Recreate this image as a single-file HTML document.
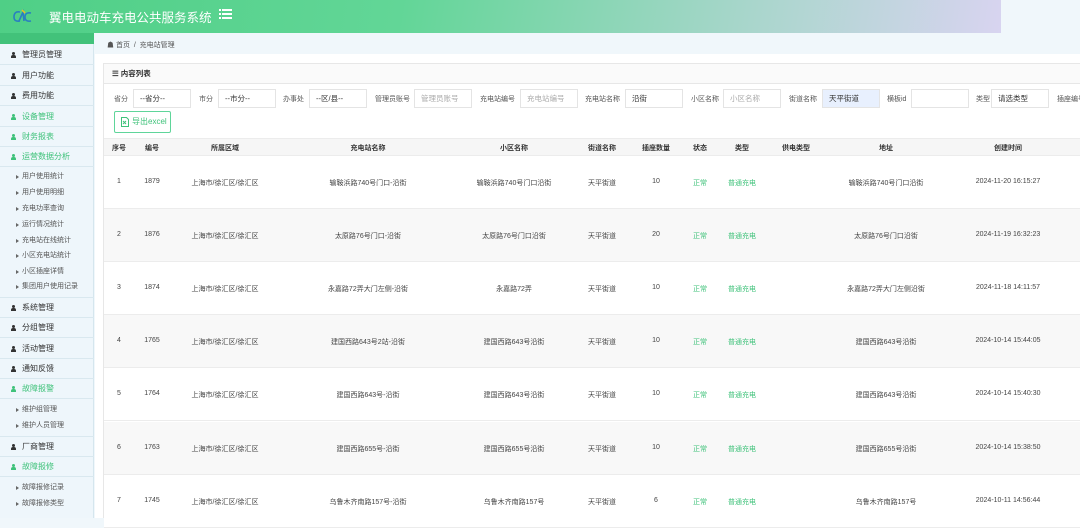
<!DOCTYPE html>
<html><head><meta charset="utf-8"><style>
*{margin:0;padding:0;box-sizing:border-box}
body{width:1080px;height:518px;overflow:hidden;background:#f0f7fb;font-family:"Liberation Sans","Noto Sans CJK SC",sans-serif;font-size:8px;color:#333;position:relative}
.hdr{position:absolute;left:0;top:0;width:1001px;height:33px;background:linear-gradient(100deg,#4fcf86 0%,#62d697 40%,#a9d6cc 75%,#d8d4f0 100%)}
.hdr .t{position:absolute;left:49px;top:7px;font-size:12.5px;color:#fff;white-space:nowrap}
.side{position:absolute;left:0;top:33px;width:94px;height:485px;background:#eef6fb;border-right:1px solid #d5e6ee}
.it{position:absolute;left:0;width:94px;height:20px;border-bottom:1px solid #d9e8ef;font-size:8px;line-height:20px;padding-left:22px;color:#333}
.it.g{color:#3fc27a}
.it i{position:absolute;left:11px;top:7px;width:5px;height:6px}
.it i:before{content:"";position:absolute;left:1px;top:0;width:3px;height:3px;border-radius:50%;background:currentColor}
.it i:after{content:"";position:absolute;left:0;top:3px;width:5px;height:3px;border-radius:2px 2px 0 0;background:currentColor}
.sub{position:absolute;left:22px;font-size:7px;color:#555;line-height:10px}
.sub:before{content:"";position:absolute;left:-6px;top:3px;border-left:3px solid #666;border-top:2px solid transparent;border-bottom:2px solid transparent}
.main{position:absolute;left:95px;top:54px;width:985px;height:464px;background:#fff}
.bc{position:absolute;left:107px;top:40px;font-size:7px;color:#555}
.card{position:absolute;left:103px;top:63px;width:977px;height:455px;border:1px solid #e7e7e7;border-right:none;background:#fff}
.ch{height:20px;background:#fafafa;border-bottom:1px solid #e7e7e7;font-size:7.5px;line-height:20px;padding-left:8px;font-weight:bold}
.lb{position:absolute;top:94px;font-size:7px;color:#555;white-space:nowrap}
.in{position:absolute;top:89px;height:19px;border:1px solid #e4e4e4;background:#fff;font-size:7.5px;line-height:17px;padding-left:6px;color:#333}
.ph{color:#aaa}
.btn{position:absolute;left:114px;top:111px;width:57px;height:22px;border:1px solid #5fd59a;border-radius:2px;color:#3fc27a;font-size:8px;line-height:20px;padding-left:17px}
.row{position:absolute;left:104px;width:976px;border-bottom:1px solid #ececec}
.c{position:absolute;transform:translateX(-50%);white-space:nowrap;font-size:7px;color:#444}
.th .c{font-weight:bold;color:#333}
.gr{color:#3fc27a!important}
</style></head><body>
<div class="hdr">
<svg style="position:absolute;left:12px;top:9px" width="22" height="14" viewBox="0 0 22 14"><path d="M8 3 Q2 2 2 8 Q2 13 8 12" stroke="#2a7fc0" stroke-width="1.6" fill="none"/><path d="M7 12 L11 3 L12 12" stroke="#2a7fc0" stroke-width="1.6" fill="none"/><path d="M19 4 Q13 3 13 8 Q13 13 19 12" stroke="#2a7fc0" stroke-width="1.6" fill="none"/><path d="M10 1 L13 4" stroke="#f0c020" stroke-width="1.5"/></svg>
<div class="t">翼电电动车充电公共服务系统</div>
<svg style="position:absolute;left:219px;top:9px" width="13" height="10"><g fill="#fff"><rect x="0" y="0" width="2" height="2"/><rect x="3" y="0" width="10" height="2"/><rect x="0" y="4" width="2" height="2"/><rect x="3" y="4" width="10" height="2"/><rect x="0" y="8" width="2" height="2"/><rect x="3" y="8" width="10" height="2"/></g></svg>
</div>
<div class="side">
<div style="position:absolute;left:0;top:0;width:94px;height:11px;background:#42c27a"></div>
<div class="it" style="top:12px"><i></i>管理员管理</div>
<div class="it" style="top:33px"><i></i>用户功能</div>
<div class="it" style="top:53px"><i></i>费用功能</div>
<div class="it g" style="top:74px"><i></i>设备管理</div>
<div class="it g" style="top:94px"><i></i>财务报表</div>
<div class="it g" style="top:114px"><i></i>运营数据分析</div>
<div class="sub" style="top:139px">用户使用统计</div>
<div class="sub" style="top:155px">用户使用明细</div>
<div class="sub" style="top:171px">充电功率查询</div>
<div class="sub" style="top:187px">运行情况统计</div>
<div class="sub" style="top:203px">充电站在线统计</div>
<div class="sub" style="top:218px">小区充电站统计</div>
<div class="sub" style="top:234px">小区插座详情</div>
<div class="sub" style="top:249px">集团用户使用记录</div>
<div style="position:absolute;top:264px;left:0;width:94px;border-top:1px solid #d9e8ef"></div>
<div class="it" style="top:265px"><i></i>系统管理</div>
<div class="it" style="top:285px"><i></i>分组管理</div>
<div class="it" style="top:306px"><i></i>活动管理</div>
<div class="it" style="top:326px"><i></i>通知反馈</div>
<div class="it g" style="top:346px"><i></i>故障报警</div>
<div class="sub" style="top:372px">维护组管理</div>
<div class="sub" style="top:388px">维护人员管理</div>
<div style="position:absolute;top:403px;left:0;width:94px;border-top:1px solid #d9e8ef"></div>
<div class="it" style="top:404px"><i></i>厂商管理</div>
<div class="it g" style="top:424px"><i></i>故障报修</div>
<div class="sub" style="top:450px">故障报修记录</div>
<div class="sub" style="top:466px">故障报修类型</div>
</div>
<div class="main"></div>
<div class="bc">☗ 首页 &nbsp;/&nbsp; 充电站管理</div>
<div class="card"><div class="ch">☰ 内容列表</div></div>
<div class="lb" style="left:114px">省分</div><div class="in" style="left:133px;width:58px">--省分--</div>
<div class="lb" style="left:199px">市分</div><div class="in" style="left:218px;width:58px">--市分--</div>
<div class="lb" style="left:283px">办事处</div><div class="in" style="left:309px;width:58px">--区/县--</div>
<div class="lb" style="left:375px">管理员账号</div><div class="in ph" style="left:414px;width:58px">管理员账号</div>
<div class="lb" style="left:480px">充电站编号</div><div class="in ph" style="left:520px;width:58px">充电站编号</div>
<div class="lb" style="left:585px">充电站名称</div><div class="in" style="left:625px;width:58px">沿街</div>
<div class="lb" style="left:691px">小区名称</div><div class="in ph" style="left:723px;width:58px">小区名称</div>
<div class="lb" style="left:789px">街道名称</div><div class="in" style="left:822px;width:58px;background:#e8f0fe">天平街道</div>
<div class="lb" style="left:887px">横板id</div><div class="in" style="left:911px;width:58px"></div>
<div class="lb" style="left:976px">类型</div><div class="in" style="left:991px;width:58px">请选类型</div>
<div class="lb" style="left:1057px">插座编号</div>
<div class="btn"><svg style="position:absolute;left:6px;top:5px" width="8" height="10"><path d="M0.5 .5h5l2 2v7h-7z" fill="none" stroke="#3fc27a"/><path d="M2 4l3 3M5 4l-3 3" stroke="#3fc27a"/></svg>导出excel</div>
<div class="row th" style="top:138px;height:18px;background:#f6f6f6;border-top:1px solid #ececec">
<div class="c" style="left:15px;top:4px">序号</div><div class="c" style="left:48px;top:4px">编号</div><div class="c" style="left:121px;top:4px">所属区域</div><div class="c" style="left:264px;top:4px">充电站名称</div><div class="c" style="left:410px;top:4px">小区名称</div><div class="c" style="left:498px;top:4px">街道名称</div><div class="c" style="left:552px;top:4px">插座数量</div><div class="c" style="left:596px;top:4px">状态</div><div class="c" style="left:638px;top:4px">类型</div><div class="c" style="left:692px;top:4px">供电类型</div><div class="c" style="left:782px;top:4px">地址</div><div class="c" style="left:904px;top:4px">创建时间</div>
</div>
<div id="rows"></div>
<script>
var d=[["1","1879","输鞍浜路740号门口-沿街","输鞍浜路740号门口沿街","10","输鞍浜路740号门口沿街","2024-11-20 16:15:27"],
["2","1876","太原路76号门口-沿街","太原路76号门口沿街","20","太原路76号门口沿街","2024-11-19 16:32:23"],
["3","1874","永嘉路72弄大门左侧-沿街","永嘉路72弄","10","永嘉路72弄大门左侧沿街","2024-11-18 14:11:57"],
["4","1765","建国西路643号2站-沿街","建国西路643号沿街","10","建国西路643号沿街","2024-10-14 15:44:05"],
["5","1764","建国西路643号-沿街","建国西路643号沿街","10","建国西路643号沿街","2024-10-14 15:40:30"],
["6","1763","建国西路655号-沿街","建国西路655号沿街","10","建国西路655号沿街","2024-10-14 15:38:50"],
["7","1745","乌鲁木齐南路157号-沿街","乌鲁木齐南路157号","6","乌鲁木齐南路157号","2024-10-11 14:56:44"]];
var h="";for(var i=0;i<7;i++){var r=d[i],t=156+i*53.1;
h+='<div class="row" style="top:'+t+'px;height:53px;background:'+(i%2?'#f8f8f8':'#fff')+'">';
var cs=[[15,r[0]],[48,r[1]],[121,"上海市/徐汇区/徐汇区"],[264,r[2]],[410,r[3]],[498,"天平街道"],[552,r[4]],[596,"正常",1],[638,"普通充电",1],[782,r[5]],[904,r[6]]];
cs.forEach(function(c){h+='<div class="c'+(c[2]?' gr':'')+'" style="left:'+c[0]+'px;top:22px">'+c[1]+'</div>'});h+='</div>';}
document.getElementById("rows").innerHTML=h;
</script>
</body></html>
